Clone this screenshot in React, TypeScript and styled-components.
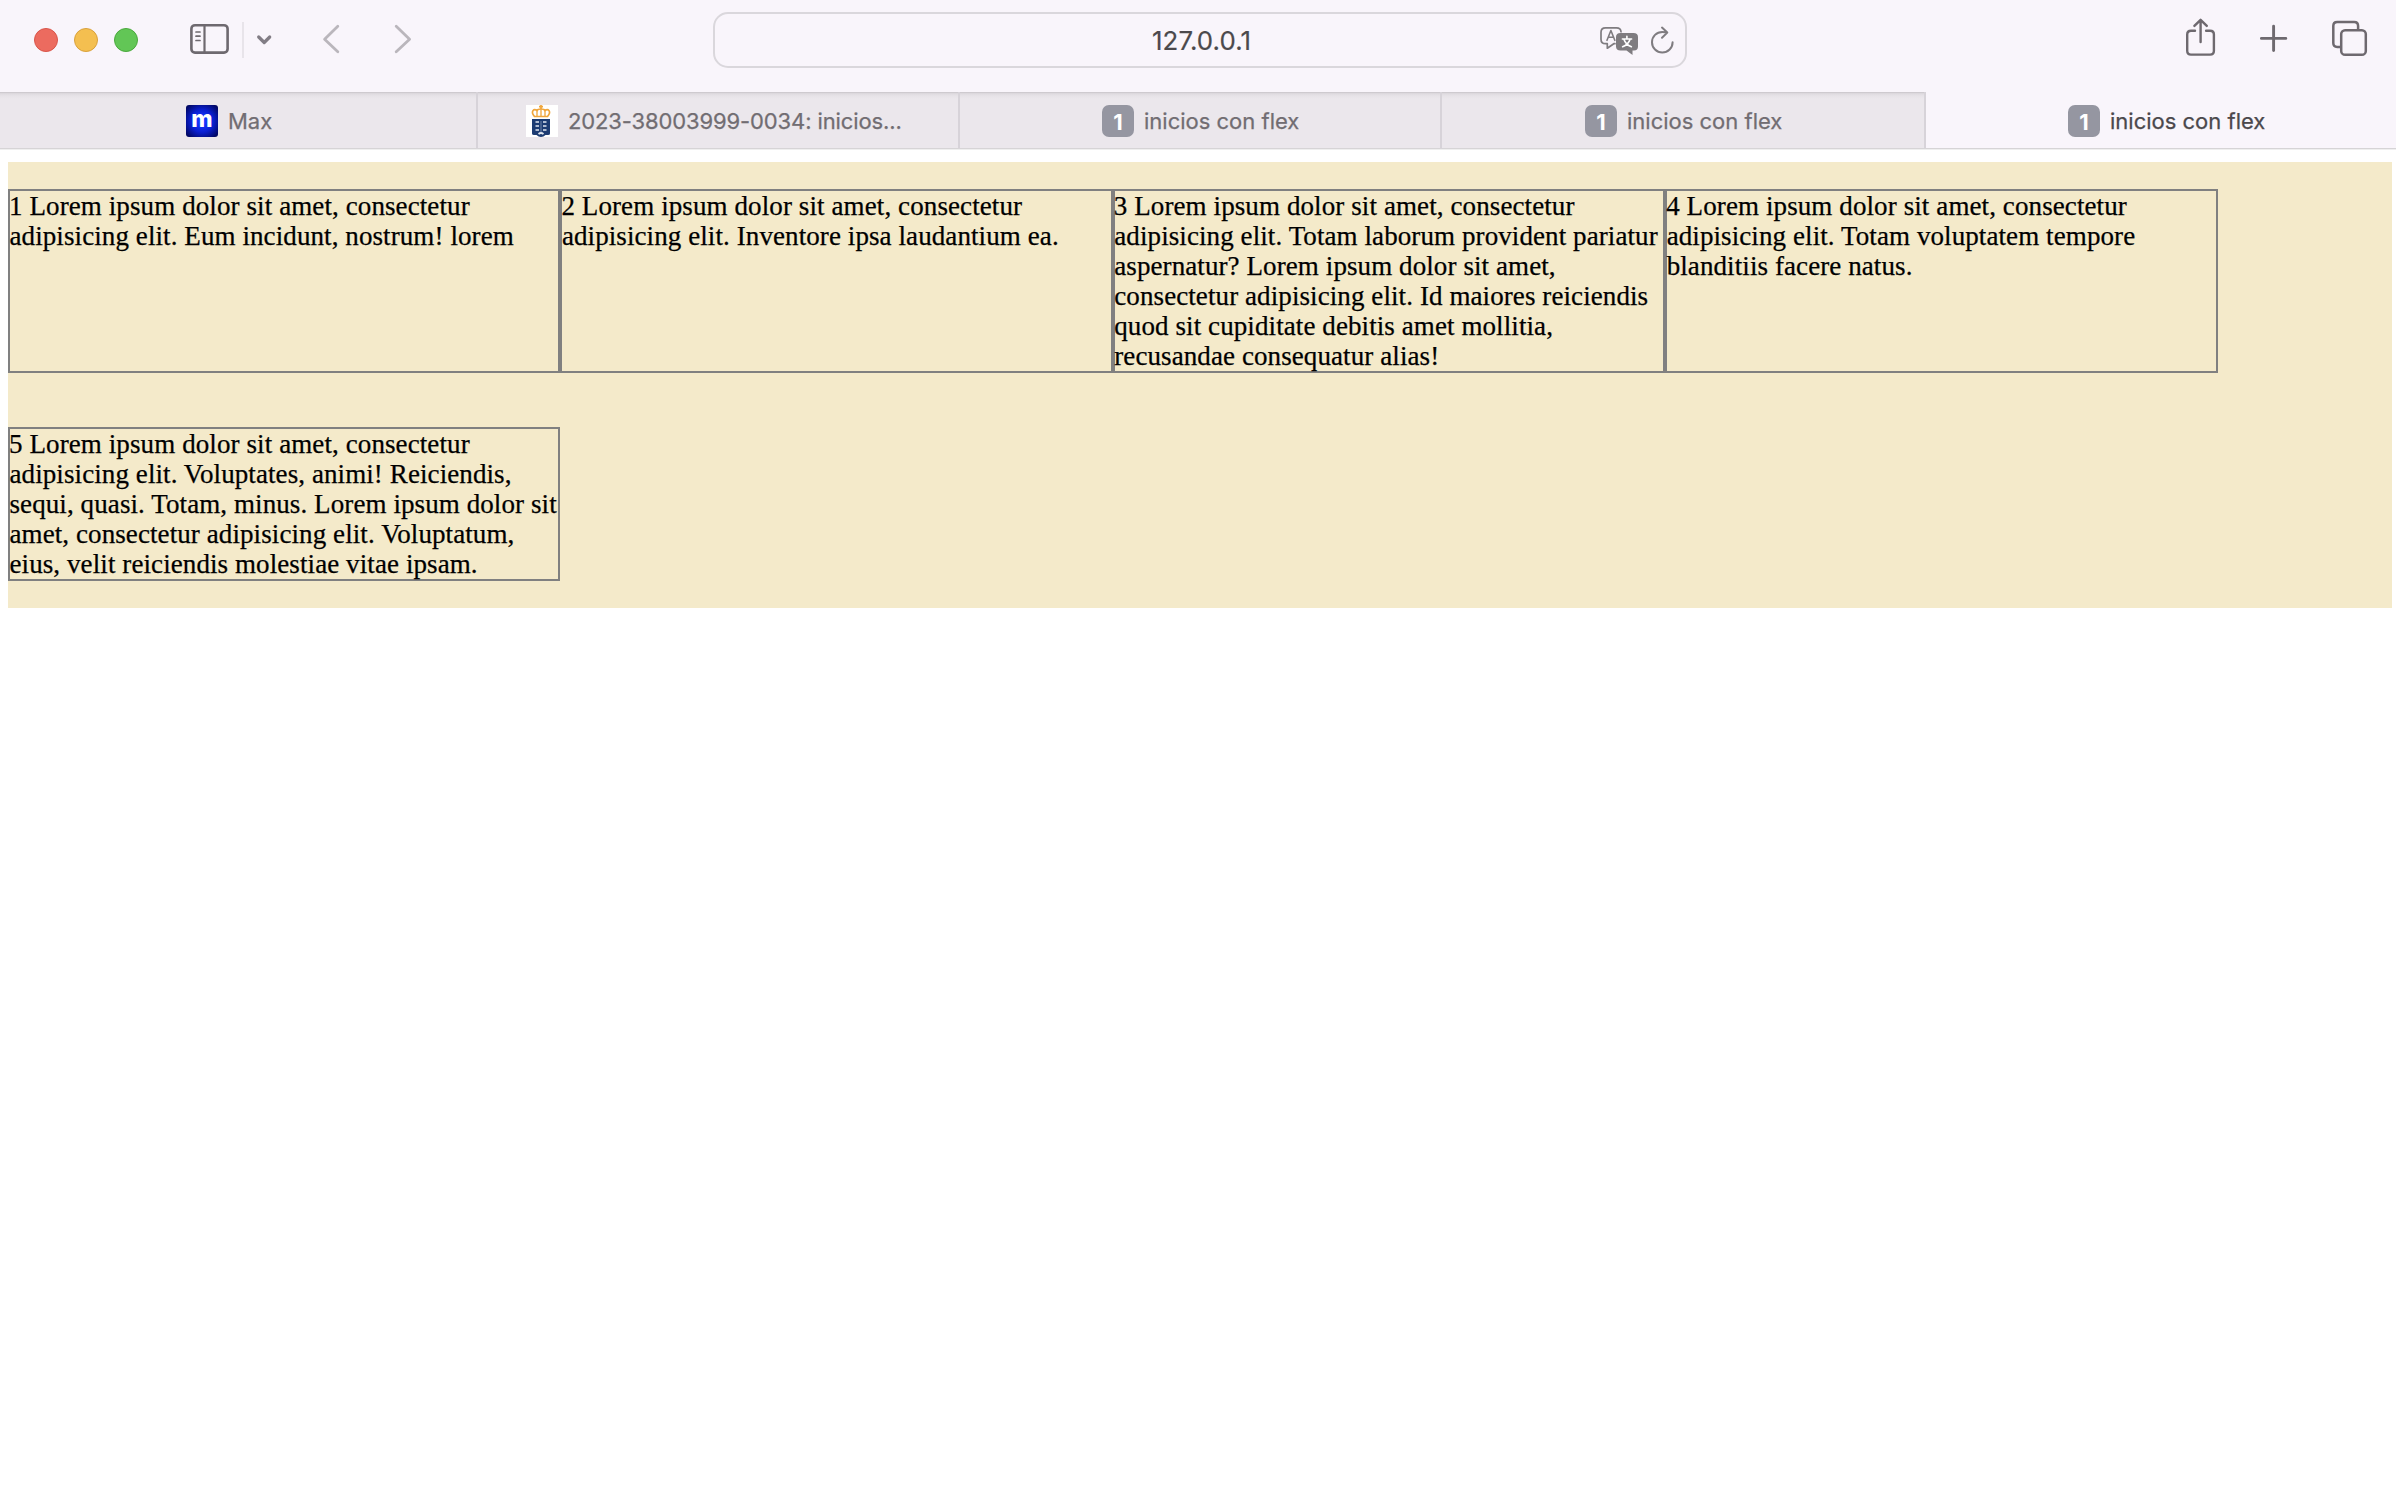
import React from "react";
import styled, { createGlobalStyle } from "styled-components";

const GlobalStyle = createGlobalStyle`
  * { box-sizing: border-box; }
  html, body { margin: 0; padding: 0; background: #fff; }
`;

const Window = styled.div`
  width: 2396px;
  height: 1498px;
  display: flex;
  flex-direction: column;
  overflow: hidden;
  background: #fff;
`;

const Toolbar = styled.header`
  height: 92px;
  flex: none;
  display: flex;
  align-items: flex-start;
  padding: 12px 28px 0 34px;
  background: #f9f5fb;
  font-family: Inter, "Liberation Sans", sans-serif;
`;

const Group = styled.div<{ $gap?: number; $ml?: number }>`
  height: 56px;
  display: flex;
  align-items: center;
  gap: ${(p) => p.$gap ?? 0}px;
  margin-left: ${(p) => p.$ml ?? 0}px;
`;

const Light = styled.span<{ $fill: string; $edge: string }>`
  width: 24px;
  height: 24px;
  border-radius: 50%;
  background: ${(p) => p.$fill};
  border: 1px solid ${(p) => p.$edge};
`;

const Divider = styled.span`
  width: 2px;
  height: 36px;
  background: #e8e4ea;
`;

const Icon = styled.svg<{ $tone?: string; $ml?: number; $height?: number }>`
  display: block;
  flex: none;
  height: ${(p) => p.$height ?? 56}px;
  margin-left: ${(p) => p.$ml ?? 0}px;
  fill: none;
  stroke: ${(p) => p.$tone ?? "#6e696f"};
  stroke-width: 2.6;
  stroke-linecap: round;
  stroke-linejoin: round;
`;

const AddressBar = styled.div`
  width: 974px;
  height: 56px;
  margin-left: 301px;
  display: flex;
  align-items: center;
  border: 2px solid #dad7dc;
  border-radius: 15px;
`;

const Address = styled.span`
  width: 885px;
  padding: 1px 0 0 437px;
  font-size: 25.8px;
  line-height: 52px;
  letter-spacing: 0.12px;
  color: #4b494c;
  -webkit-text-stroke: 0.2px #4b494c;
  white-space: nowrap;
`;

const TabStrip = styled.nav`
  height: 58px;
  flex: none;
  display: flex;
  border-bottom: 1px solid #efefef;
  background: #f9f5fb;
`;

const Tab = styled.div<{ $width: number; $pad: number; $active?: boolean }>`
  width: ${(p) => p.$width}px;
  height: 57px;
  flex: none;
  display: flex;
  align-items: center;
  gap: 10px;
  padding: 1px 0 0 ${(p) => p.$pad}px;
  font-family: Inter, "Liberation Sans", sans-serif;
  font-size: 22px;
  white-space: nowrap;
  color: ${(p) => (p.$active ? "#4b484c" : "#716d72")};
  background: ${(p) =>
    p.$active
      ? "#f9f5fb"
      : "linear-gradient(#c4c0c5 0, #d8d4d9 1px, #e0dce1 2px, #e7e3e8 4px, #ebe7ec 7px)"};
  border-right: ${(p) => (p.$active ? "none" : "2px solid #d7d3d9")};
  border-bottom: 1px solid #d6d4d6;
`;

const TabLabel = styled.span<{ $spacing?: number }>`
  letter-spacing: ${(p) => p.$spacing ?? 0}px;
  -webkit-text-stroke: 0.25px currentColor;
`;

const MaxIcon = styled.span`
  width: 32px;
  height: 32px;
  border-radius: 3px;
  display: flex;
  align-items: center;
  justify-content: center;
  padding-bottom: 2px;
  background: radial-gradient(circle, #1535ff 15%, #0a1fd0 50%, #020a70 85%, #010650);
  color: #fff;
  font-size: 23px;
  font-weight: 800;
  line-height: 27px;
`;

const NumberIcon = styled.span`
  width: 32px;
  height: 32px;
  border-radius: 7px;
  display: flex;
  align-items: center;
  justify-content: center;
  padding-top: 2px;
  background: #9596a1;
  color: #fff;
  font-size: 22px;
  font-weight: 700;
`;

const CrestIcon = styled.svg`
  width: 32px;
  height: 32px;
  background: #fff;
`;

const Page = styled.main`
  padding: 12px 4px 0 8px;
`;

const FlexBox = styled.section`
  display: flex;
  flex-wrap: wrap;
  background: #f4eaca;
`;

const Item = styled.p`
  width: 552.4px;
  margin: 27px 0;
  border: 2px solid #808080;
  font-family: "Liberation Serif", "Times New Roman", serif;
  font-size: 27px;
  line-height: 30px;
  letter-spacing: 0.09px;
  text-indent: -0.5px;
  color: #000;
  -webkit-text-stroke: 0.25px #000;
`;

const Line = styled.span`
  display: block;
  white-space: nowrap;

  &:first-child {
    letter-spacing: 0.1px;
    text-indent: -1px;
  }
`;

const items: string[][] = [
  ["1 Lorem ipsum dolor sit amet, consectetur", "adipisicing elit. Eum incidunt, nostrum! lorem"],
  ["2 Lorem ipsum dolor sit amet, consectetur", "adipisicing elit. Inventore ipsa laudantium ea."],
  [
    "3 Lorem ipsum dolor sit amet, consectetur",
    "adipisicing elit. Totam laborum provident pariatur",
    "aspernatur? Lorem ipsum dolor sit amet,",
    "consectetur adipisicing elit. Id maiores reiciendis",
    "quod sit cupiditate debitis amet mollitia,",
    "recusandae consequatur alias!",
  ],
  [
    "4 Lorem ipsum dolor sit amet, consectetur",
    "adipisicing elit. Totam voluptatem tempore",
    "blanditiis facere natus.",
  ],
  [
    "5 Lorem ipsum dolor sit amet, consectetur",
    "adipisicing elit. Voluptates, animi! Reiciendis,",
    "sequi, quasi. Totam, minus. Lorem ipsum dolor sit",
    "amet, consectetur adipisicing elit. Voluptatum,",
    "eius, velit reiciendis molestiae vitae ipsam.",
  ],
];

const Crest = () => (
  <CrestIcon viewBox="0 0 32 32">
    <g fill="none" stroke="#f0a63c" strokeWidth="1.7">
      <path d="M15 0v4M13 1.700h4" />
      <path d="M8.500 11.500C4 6 8 3.500 11 5.500C12 3.500 18 3.500 19 5.500C22 3.500 26 6 21.500 11.500Z" />
      <path d="M11 6v5M15 4v7M19 6v5" strokeWidth="1.300" />
    </g>
    <path d="M6 14h18v14.500q0 1.500-2 1.500h-2.500q-2 2-4.500 2t-4.500-2H8q-2 0-2-1.500z" fill="#1c3b72" />
    <path
      d="M9.500 17h3.500M17 17h3.500M9.500 21h3.500M17 21h3.500M9.500 25h3.500M17 25h3.500M12.500 29q2.500-2 5 0"
      stroke="#dfe6ef"
      strokeWidth="1.700"
      fill="none"
    />
    <path d="M15 16v11" stroke="#6f86ab" strokeWidth="1" />
  </CrestIcon>
);

export default function App() {
  return (
    <>
      <GlobalStyle />
      <Window>
        <Toolbar>
          <Group $gap={16}>
            <Light $fill="#ec6b5f" $edge="#d9554a" />
            <Light $fill="#f4bf50" $edge="#d9a13c" />
            <Light $fill="#62c656" $edge="#4aa93d" />
          </Group>
          <Group $ml={52}>
            <Icon width="39" viewBox="190 12 39 56">
              <rect x="191.4" y="25.2" width="36.2" height="27.4" rx="3.6" />
              <path d="M204.5 25.5v27" strokeWidth="2.2" />
              <path d="M196 32h4M196 36.2h4M196 40.5h4" strokeWidth="1.7" />
            </Icon>
            <Group $ml={13}>
              <Divider />
            </Group>
            <Icon width="18" viewBox="255 12 18 56" $ml={11} $tone="#827d85">
              <path d="M258.7 37l5.500 5.500 5.500-5.500" strokeWidth="3.2" />
            </Icon>
            <Icon width="18" viewBox="322 12 18 56" $ml={49} $tone="#bab6bc">
              <path d="M337.8 26.300L324.600 39.200l13.200 12.500" strokeWidth="2.8" />
            </Icon>
            <Icon width="18" viewBox="394 12 18 56" $ml={54} $tone="#bab6bc">
              <path d="M396.200 26.300l13.400 12.900-13.400 12.500" strokeWidth="2.8" />
            </Icon>
          </Group>
          <AddressBar>
            <Address>127.0.0.1</Address>
            <Icon width="38" viewBox="1600 14 38 52" $height={52} $tone="#7f7c80">
              <path
                d="M1615 43.700h-1.200l-6.500 4.500v-4.500h-1.800q-4.500 0-4.500-4.500v-6.900q0-4.500 4.500-4.500h11q4.300 0 4.500 4"
                strokeWidth="1.7"
              />
              <path d="M1607 40.300l3.900-9.800 3.900 9.800M1608.300 37.300h5.200" strokeWidth="1.600" />
              <path
                d="M1620.500 33h13q4.500 0 4.500 4v9.500q0 4-4 4h-1.500v4.500l-6-4.500h-6q-4.500 0-4.500-4V37q0-4 4.500-4z"
                fill="#7f7c80"
                stroke="none"
              />
              <path
                d="M1626.900 36.200v2.500M1622.400 39h9.200M1630 39.400q-1.600 5-7.400 7.300M1624 39.400q1.600 5 7.400 7.300"
                stroke="#fff"
                strokeWidth="1.600"
              />
            </Icon>
            <Icon width="26" viewBox="1650 14 26 52" $height={52} $ml={12} $tone="#7f7c80">
              <path
                d="M1672.600 42.200a10.300 10.300 0 1 1-10.300-10.300q2.500 0 4.700.6M1662 27.600l5.300 5-5.300 5.200"
                strokeWidth="2"
              />
            </Icon>
          </AddressBar>
          <Group $ml={498}>
            <Icon width="31" viewBox="2185 12 31 56">
              <path
                d="M2195 30.700h-4q-3.800 0-3.800 3.800v16.300q0 3.800 3.800 3.800h19.100q3.800 0 3.800-3.800V34.500q0-3.800-3.800-3.800h-4"
                strokeWidth="2.4"
              />
              <path d="M2200.600 42V20.600M2194.400 25.900l6.200-6.100 6.200 6.100" strokeWidth="2.4" />
            </Icon>
            <Icon width="29" viewBox="2259 12 29 56" $ml={43}>
              <path d="M2261.400 38.400h24.400M2273.600 26.200v24.400" strokeWidth="2.9" />
            </Icon>
            <Icon width="37" viewBox="2331 12 37 56" $ml={43}>
              <path
                d="M2340 47h-2.800q-3.900 0-3.900-3.900V26q0-3.900 3.900-3.900h17q3.900 0 3.900 3.900v3"
                strokeWidth="2.5"
              />
              <rect x="2341.2" y="30.2" width="24.6" height="24.6" rx="3.9" strokeWidth="2.5" />
            </Icon>
          </Group>
        </Toolbar>
        <TabStrip>
          <Tab $width={478} $pad={186}>
            <MaxIcon>m</MaxIcon>
            <TabLabel>Max</TabLabel>
          </Tab>
          <Tab $width={482} $pad={48}>
            <Crest />
            <TabLabel $spacing={-0.12}>2023-38003999-0034: inicios...</TabLabel>
          </Tab>
          <Tab $width={482} $pad={142}>
            <NumberIcon>1</NumberIcon>
            <TabLabel>inicios con flex</TabLabel>
          </Tab>
          <Tab $width={484} $pad={143}>
            <NumberIcon>1</NumberIcon>
            <TabLabel>inicios con flex</TabLabel>
          </Tab>
          <Tab $width={470} $pad={142} $active>
            <NumberIcon>1</NumberIcon>
            <TabLabel>inicios con flex</TabLabel>
          </Tab>
        </TabStrip>
        <Page>
          <FlexBox>
            {items.map((lines) => (
              <Item key={lines[0]}>
                {lines.map((line) => (
                  <Line key={line}>{line}</Line>
                ))}
              </Item>
            ))}
          </FlexBox>
        </Page>
      </Window>
    </>
  );
}
